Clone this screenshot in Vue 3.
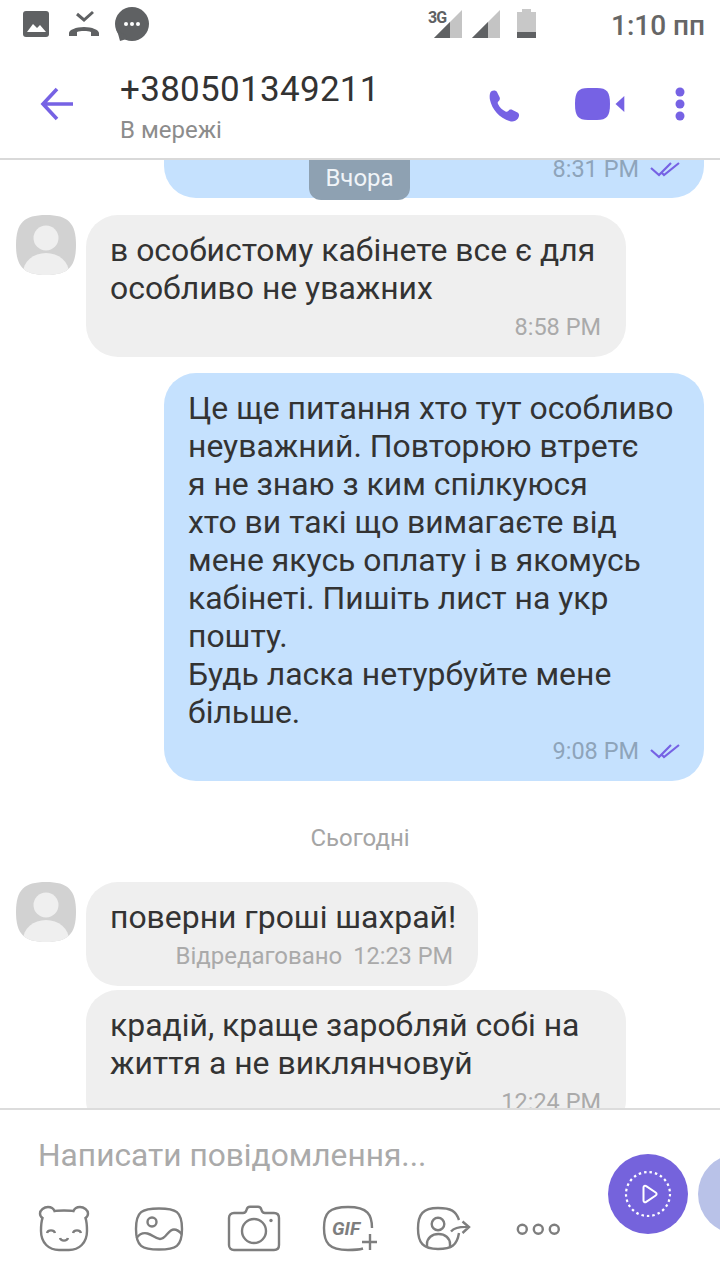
<script setup>
const messages = [
  { id: 1, kind: "out", clipped: true, time: "8:31 PM", lines: [] },
  {
    id: 2,
    kind: "in",
    avatar: true,
    time: "8:58 PM",
    lines: ["в особистому кабінете все є для", "особливо не уважних"],
  },
  {
    id: 3,
    kind: "out",
    time: "9:08 PM",
    lines: [
      "Це ще питання хто тут особливо",
      "неуважний. Повторюю втретє",
      "я не знаю з ким спілкуюся",
      "хто ви такі що вимагаєте від",
      "мене якусь оплату і в якомусь",
      "кабінеті. Пишіть лист на укр",
      "пошту.",
      "Будь ласка нетурбуйте мене",
      "більше.",
    ],
  },
  { id: 4, kind: "day", label: "Сьогодні" },
  {
    id: 5,
    kind: "in",
    avatar: true,
    short: true,
    edited: true,
    time: "12:23 PM",
    lines: ["поверни гроші шахрай!"],
  },
  {
    id: 6,
    kind: "in",
    follow: true,
    time: "12:24 PM",
    lines: ["крадій, краще заробляй собі на", "життя а не виклянчовуй"],
  },
];
</script>

<template>
  <div class="screen">
    <div class="status">
      <svg class="st-icon" width="130" height="44" viewBox="0 0 130 44">
        <rect x="3" y="11" width="26" height="26" rx="3" fill="#5f6163" />
        <path d="M7 32l6-8 4 4 3-3 6 7z" fill="#fff" />
        <path d="M49 33c0-3 7-6 15-6s15 3 15 6v3h-8v-4c-2-1-4-1-7-1s-5 0-7 1v4h-8z" fill="#5f6163" />
        <path d="M57 14l7 6 9-8" fill="none" stroke="#5f6163" stroke-width="3" />
        <circle cx="112" cy="24" r="17" fill="#5f6163" />
        <path d="M97 30l3 11 10-3z" fill="#5f6163" />
        <circle cx="106" cy="24" r="2" fill="#fff" />
        <circle cx="112" cy="24" r="2" fill="#fff" />
        <circle cx="118" cy="24" r="2" fill="#fff" />
      </svg>
      <div class="st-right">
        <svg width="114" height="40" viewBox="0 0 114 40">
          <path d="M8 38L36 10v28z" fill="#c4c4c4" />
          <path d="M8 38l16-16v16z" fill="#5f6163" />
          <text x="2" y="23" class="net">3G</text>
          <path d="M46 38l28-28v28z" fill="#c4c4c4" />
          <path d="M46 38l16-16v16z" fill="#5f6163" />
          <path d="M91 12h5v-3h9v3h5v26H91z" fill="#c8c8c8" />
          <rect x="91" y="32" width="19" height="6" fill="#5f6163" />
        </svg>
        <span class="clock">1:10 пп</span>
      </div>
    </div>

    <header class="head">
      <svg class="back" width="36" height="36" viewBox="0 0 36 36">
        <path d="M4 18h30M18 3L4 18l14 15" fill="none" stroke="#7662e4" stroke-width="3.6" />
      </svg>
      <div class="who">
        <div class="phone">+380501349211</div>
        <div class="online">В мережі</div>
      </div>
      <svg class="actions" width="200" height="40" viewBox="0 0 200 40">
        <path
          d="M4 4.500c2-1.500 5-1.500 6 .5l2.500 5c.8 1.600.3 3.300-1 4.300-.9.700-1 1.700-.5 2.700 1.800 3.500 4 5.700 7.500 7.500 1 .5 2 .3 2.700-.5 1-1.300 2.700-1.800 4.300-1l5 2.500c2 1 2 4 .5 6-2 2.500-5 3.500-8 2.700C12 31 5 22 3 13c-.6-3 -.5-6.500 1-8.500z"
          transform="translate(-1,3)"
          fill="#7662e4"
        />
        <path
          d="M100 4h9c10 0 13 4 13 16s-3 16-13 16h-9c-10 0-13-4-13-16s3-16 13-16z"
          fill="#7662e4"
        />
        <path d="M127.500 20l8.800-8v16z" fill="#7662e4" />
        <circle cx="192" cy="8" r="4.500" fill="#7662e4" />
        <circle cx="192" cy="20" r="4.500" fill="#7662e4" />
        <circle cx="192" cy="32" r="4.500" fill="#7662e4" />
      </svg>
    </header>

    <main class="chat">
      <div class="pill">Вчора</div>
      <template v-for="m in messages" :key="m.id">
        <div v-if="m.kind === 'day'" class="day">{{ m.label }}</div>
        <div v-else class="row" :class="[m.kind, { follow: m.follow, first: m.clipped }]">
          <svg v-if="m.avatar" class="avatar" width="60" height="60" viewBox="0 0 60 60">
            <defs>
              <clipPath :id="'ava' + m.id">
                <path d="M30 0c22 0 30 8 30 30s-8 30-30 30S0 52 0 30 8 0 30 0z" />
              </clipPath>
            </defs>
            <g :clip-path="'url(#ava' + m.id + ')'">
              <rect width="60" height="60" fill="#d2d2d2" />
              <circle cx="30" cy="23" r="12.500" fill="#efefef" />
              <ellipse cx="30" cy="58" rx="23" ry="20" fill="#efefef" />
            </g>
          </svg>
          <div class="bubble" :class="{ short: m.short, clipped: m.clipped }">
            <div v-for="line in m.lines" :key="line" class="line">{{ line }}</div>
            <div class="meta">
              <span v-if="m.edited" class="edited">Відредаговано</span>
              <span>{{ m.time }}</span>
              <svg v-if="m.kind === 'out'" class="ticks" width="30" height="16" viewBox="0 0 30 16">
                <path
                  d="M1 7l8 7L21 2M12 12l2 2L29 2"
                  fill="none"
                  stroke="#7662e4"
                  stroke-width="2.200"
                />
              </svg>
            </div>
          </div>
        </div>
      </template>
    </main>

    <footer class="composer">
      <div class="left">
        <div class="placeholder">Написати повідомлення...</div>
        <div class="tools">
          <svg class="tool" viewBox="0 0 56 48">
            <path
              d="M12 2C8 2 4 5 4 8.500 4 10.500 5 12 6.500 13 5.500 16 5 20 5 26c0 12 8 19 18 19h10c10 0 18-7 18-19 0-6-.5-10-1.500-13 1.500-1 2.500-2.500 2.500-4.500C52 5 48 2 44 2c-3 0-5.500 1.500-6.500 4-3-.7-16-.7-19 0C17.500 3.500 15 2 12 2z"
            />
            <path d="M11 28c1-3.500 7-3.500 8 0M37 28c1-3.500 7-3.500 8 0M24 33c1 3.500 7 3.500 8 0" />
          </svg>
          <svg class="tool" viewBox="0 0 56 48">
            <path
              d="M28 3.500c17 0 23 3 23 20.500s-6 20.500-23 20.500S5 41.500 5 24 11 3.500 28 3.500z"
            />
            <circle cx="21" cy="17" r="4.500" />
            <path d="M5.500 33c3-4 7-5.500 11-4.500 5 1.200 8 5.500 12.500 5.500 6 0 8-9.500 14-9.500 3 0 6 2.500 8 5" />
          </svg>
          <svg class="tool" viewBox="0 0 56 48">
            <path
              d="M8 8h9c2 0 3-1 3.500-3 .5-2 1.500-3.200 3.500-3.200h8c2 0 3 1.200 3.500 3.200.5 2 1.500 3 3.500 3h9c3 0 5 2 5 5v27c0 3-2 5-5 5H8c-3 0-5-2-5-5V13c0-3 2-5 5-5z"
            />
            <circle cx="28" cy="26" r="12" />
            <circle class="solid" cx="45" cy="15.500" r="1.700" />
          </svg>
          <svg class="tool" viewBox="0 0 56 48">
            <path
              d="M51 23C51 10 47 2 27 2 8 2 3 8 3 23s5 22 24 22c6 0 10 0 15-1.500"
            />
            <text x="11" y="30" class="gif">GIF</text>
            <path d="M49 29v16M41 37h16" />
          </svg>
          <svg class="tool" viewBox="0 0 56 48">
            <path d="M43 15C40 6 35 3 22 3 7 3 2 9 2 23.500S7 44 22 44c14 0 19-4 21-16" />
            <circle cx="22" cy="19" r="6.300" />
            <path d="M11 43v-4c0-6 5-10 11.500-10S34 33 34 39v4" />
            <path d="M35 26.500c4-4.500 10-5 18-4.500M46.500 16.500L53 22l-6.500 6" />
          </svg>
          <svg class="tool" viewBox="0 0 56 48">
            <circle cx="11.300" cy="24.300" r="4.500" />
            <circle cx="27.300" cy="24.300" r="4.500" />
            <circle cx="43.300" cy="24.300" r="4.500" />
          </svg>
        </div>
      </div>
      <div class="buttons">
        <svg class="rec" width="80" height="80" viewBox="0 0 80 80">
          <circle cx="40" cy="40" r="40" fill="#7563dc" />
          <circle
            cx="40"
            cy="40"
            r="22"
            fill="none"
            stroke="#fff"
            stroke-width="2.200"
            stroke-dasharray="2.500 3"
          />
          <path
            d="M35.500 33.500c0-1.500 1.500-2.200 2.700-1.400l9.500 6.400c1.200.8 1.200 2.300 0 3l-9.500 6.400c-1.200.8-2.700.1-2.700-1.400z"
            fill="none"
            stroke="#fff"
            stroke-width="2"
          />
        </svg>
        <div class="second"></div>
      </div>
    </footer>
  </div>
</template>

<style scoped>
.screen {
  width: 720px;
  height: 1280px;
  display: flex;
  flex-direction: column;
  background: #fff;
  overflow: hidden;
  font-family: Roboto, "Noto Sans", sans-serif;
  color: #333;
}

.status {
  height: 50px;
  display: flex;
  justify-content: space-between;
  align-items: flex-start;
  padding-left: 20px;
}

.st-right {
  display: flex;
  align-items: flex-start;
  padding-right: 17px;
}

.clock {
  margin-left: 71px;
  width: 92px;
  font-size: 28px;
  font-weight: 500;
  line-height: 52px;
  color: #666;
  white-space: nowrap;
}

.net {
  font-family: Roboto, sans-serif;
  font-size: 16px;
  font-weight: 700;
  fill: #5f6163;
  letter-spacing: -1px;
}

.head {
  height: 108px;
  display: flex;
  align-items: center;
  border-bottom: 2px solid #d9d9d9;
  padding-left: 39px;
}

.back {
  flex-shrink: 0;
}

.who {
  margin-left: 45px;
  width: 368px;
  margin-top: 7px;
}

.phone {
  font-size: 35px;
  line-height: 42px;
  letter-spacing: 0.3px;
  color: #333;
}

.online {
  margin-top: 3px;
  font-size: 24px;
  line-height: 32px;
  color: #8c8c8c;
}

.actions {
  flex-shrink: 0;
}

.chat {
  position: relative;
  flex: 1;
  min-height: 0;
  overflow: hidden;
}

.pill {
  position: absolute;
  top: 0;
  left: 309px;
  width: 101px;
  height: 40px;
  border-radius: 0 0 12px 12px;
  background: #8ea1b2;
  color: #f0f4f8;
  font-size: 24px;
  line-height: 37px;
  text-align: center;
  z-index: 1;
}

.row {
  display: flex;
  align-items: flex-start;
  margin-bottom: 16px;
}

.row.first {
  margin-bottom: 17px;
}

.row.in {
  padding-left: 16px;
}

.row.out {
  justify-content: flex-end;
  padding-right: 16px;
}

.row.follow {
  margin-top: -12px;
  padding-left: 86px;
}

.avatar {
  flex-shrink: 0;
  margin-right: 10px;
}

.bubble {
  width: 540px;
  box-sizing: border-box;
  padding: 16px 25px 11px 24px;
  border-radius: 32px;
  font-size: 31.9px;
  line-height: 38px;
}

.line {
  white-space: nowrap;
}

.in .bubble {
  background: #efefef;
}

.out .bubble {
  background: #c5e1fe;
}

.bubble.short {
  width: 392px;
}

.bubble.clipped {
  height: 38px;
  padding-top: 0;
  padding-bottom: 0;
  border-radius: 0 0 32px 32px;
}

.clipped .meta {
  margin-top: -11px;
}

.meta {
  display: flex;
  justify-content: flex-end;
  align-items: center;
  padding-top: 1px;
  font-size: 23.5px;
  line-height: 38px;
  color: #aaa;
}

.out .meta {
  color: #8ea4ba;
}

.edited {
  margin-right: 11px;
  font-size: 24px;
}

.ticks {
  margin-left: 11px;
  margin-right: -1px;
}

.day {
  margin: 42px 0 29px;
  height: 30px;
  font-size: 24px;
  line-height: 30px;
  text-align: center;
  color: #a5a5a5;
}

.composer {
  height: 170px;
  flex-shrink: 0;
  display: flex;
  border-top: 2px solid #dcdcdc;
}

.left {
  width: 608px;
  flex-shrink: 0;
}

.placeholder {
  padding: 26px 0 0 38px;
  height: 64px;
  box-sizing: border-box;
  font-size: 31.7px;
  line-height: 40px;
  color: #aaa;
  white-space: nowrap;
}

.tools {
  margin-top: 31px;
  padding-left: 36px;
  display: flex;
  gap: 39px;
}

.tool {
  width: 56px;
  height: 48px;
  flex-shrink: 0;
  fill: none;
  stroke: #7e7e7e;
  stroke-width: 2.400;
}

.tool .solid {
  fill: #7e7e7e;
  stroke: none;
}

.gif {
  font-family: Roboto, sans-serif;
  font-size: 19px;
  font-weight: 700;
  font-style: italic;
  fill: #7e7e7e;
  stroke: none;
}

.buttons {
  display: flex;
  gap: 10px;
  padding-top: 44px;
  flex-shrink: 0;
}

.rec {
  flex-shrink: 0;
}

.second {
  width: 80px;
  height: 80px;
  border-radius: 50%;
  background: #b9c2e8;
  flex-shrink: 0;
}
</style>
